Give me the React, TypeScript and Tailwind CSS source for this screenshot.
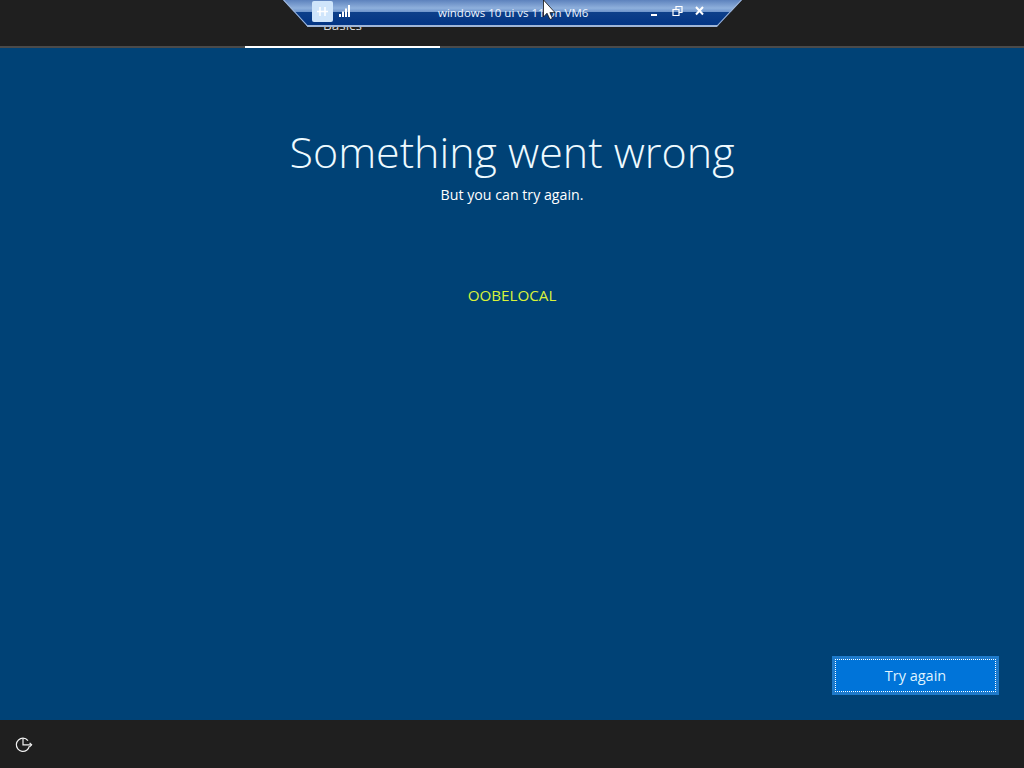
export default function App() {
  return (
    <div className="relative flex h-[768px] w-[1024px] flex-col overflow-hidden bg-[#1f1f1f] font-['Open_Sans','Noto_Sans',sans-serif] text-white">
      <header className="flex h-[46px] items-start bg-[#1f1f1f] pl-[245px]">
        <div className="mt-[15px] flex h-[20px] w-[195px] justify-center text-[13.5px] leading-[20px] text-[#d8d8d8]">Basics</div>
      </header>
      <div className="h-[2px] bg-[#4a4a4a] pl-[245px]">
        <div className="h-[2px] w-[195px] bg-white" />
      </div>
      <main className="flex h-[672px] flex-col items-center bg-[#004276]">
        <h1 className="mt-[74px] text-[43px] leading-[60px] font-light text-[#eefaff]">Something went wrong</h1>
        <p className="mt-[3px] text-[14.2px] leading-[20px] text-white">But you can try again.</p>
        <p className="mt-[80px] text-[15.2px] leading-[20px] text-[#d9f23a]">OOBELOCAL</p>
        <div className="mt-auto mb-[25px] flex w-full justify-end pr-[25px]">
          <button className="flex h-[39px] w-[167px] items-center justify-center border-[3px] border-[#1f7aca] bg-[#0074d9] text-[14.5px] text-[#dff3ff] outline-1 -outline-offset-4 outline-dotted outline-white">Try again</button>
        </div>
      </main>
      <footer className="flex h-[48px] items-center bg-[#1f1f1f] pt-[2px] pl-[15px]">
        <svg width="18" height="18" viewBox="0 0 18 18" fill="none" stroke="#f0f0f0" strokeWidth="1.2">
          <path d="M8 2.2A6.6 6.6 0 1 0 14.4 10.2" />
          <path d="M8 2.2A6.6 6.6 0 0 1 13 4.6" />
          <path d="M8 2.2V8.8H16.5" />
          <path d="M14.6 6.8L16.6 8.8L14.6 10.8" />
        </svg>
      </footer>

      <div className="absolute top-0 left-[283px] flex h-[27px] w-[459px] items-center bg-[linear-gradient(#5d82bd_0%,#8fb0dc_30%,#6f95cc_44%,#0d3f8a_46%,#033584_92%,#a0b6d8_93%,#a0b6d8_100%)] pb-[5px] pl-[29px] [clip-path:polygon(0_0,100%_0,94.5%_100%,5.4%_100%)]">
        <svg className="absolute inset-0" width="459" height="27" viewBox="0 0 459 27" fill="none" stroke="#a0b6d8" strokeWidth="2">
          <path d="M0 0L24.8 27M459 0L433.8 27" />
        </svg>
        <div className="relative flex h-[21px] w-[21px] items-center justify-center rounded-[2px] bg-[#cfe5fb]">
          <svg width="13" height="11" viewBox="0 0 13 11" fill="none" stroke="#ffffff" strokeWidth="1.5">
            <path d="M4 1V10M9 1V10M1 5.5H12" />
          </svg>
        </div>
        <svg className="relative ml-[6px]" width="12" height="12" viewBox="0 0 12 12" fill="#ffffff">
          <rect x="0" y="9" width="2" height="3" />
          <rect x="3" y="6.5" width="2" height="5.5" />
          <rect x="6" y="3.5" width="2" height="8.5" />
          <rect x="9" y="0" width="2" height="12" />
        </svg>
        <span className="relative mt-[4px] ml-[87px] w-[149px] text-center text-[11.5px] leading-none whitespace-nowrap text-[#eef5ff]">windows 10 ui vs 11 on VM6</span>
        <svg className="relative ml-[63px]" width="60" height="12" viewBox="0 0 60 12" fill="none" stroke="#ffffff">
          <path d="M1 10H7" strokeWidth="2" />
          <path d="M23 4.5H29V10.5H23ZM26 4V1.5H32V7.5H29.5" strokeWidth="1.2" />
          <path d="M46 2L53 9.5M53 2L46 9.5" strokeWidth="2" />
        </svg>
      </div>

      <svg className="absolute top-0 left-[543px]" width="14" height="21" viewBox="0 0 14 21">
        <path d="M0.5 0V17L4 13.2L7 19.5L9.5 18.4L6.9 12.6H12Z" fill="#ffffff" stroke="#111111" strokeWidth="0.8" />
      </svg>
    </div>
  );
}
